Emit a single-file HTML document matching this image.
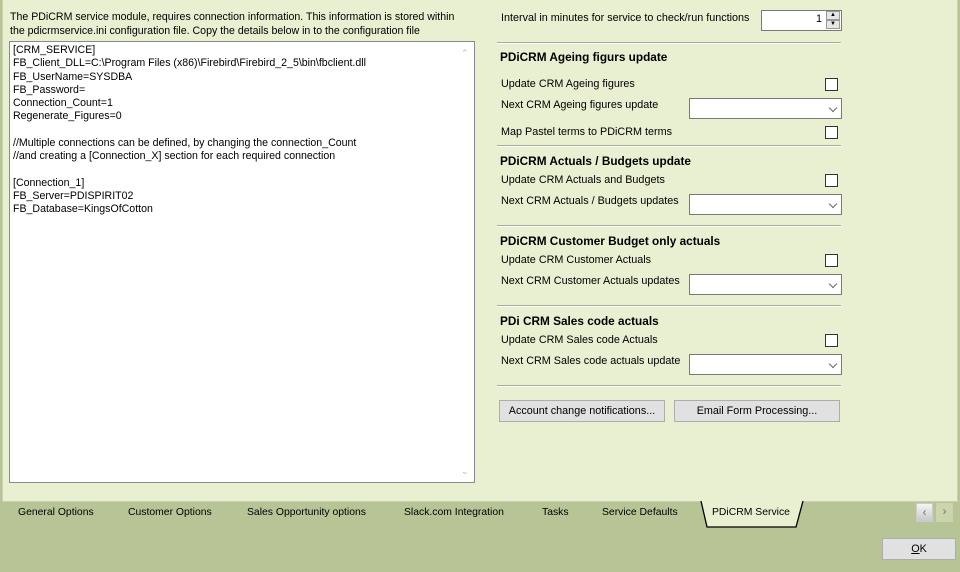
<!DOCTYPE html>
<html><head><style>
*{margin:0;padding:0;box-sizing:border-box}
body{width:960px;height:572px;background:#b6c496;font-family:"Liberation Sans",sans-serif;font-size:10.8px;color:#000;position:relative;overflow:hidden}
.a{position:absolute;white-space:nowrap}
#panel{position:absolute;left:2px;top:0;width:956px;height:502px;background:#e9efd1;border:1px solid #c9d0b0;border-top:none}
#memo{left:9px;top:41px;width:466px;height:442px;background:#fff;border:1px solid #8a8a8a;padding:2px 3px;line-height:13.25px;font-size:10.6px;white-space:pre}
.hr{position:absolute;left:497px;width:344px;height:2px;border-top:1px solid #a8ad98;border-bottom:1px solid #fff}
.cb{position:absolute;left:825px;width:13px;height:13px;background:#fff;border:1px solid #333}
.combo{position:absolute;left:689px;width:153px;height:21px;background:#fff;border:1px solid #7a7a7a}
.combo:after{content:"";position:absolute;right:5px;top:6px;width:5px;height:5px;border-right:1px solid #666;border-bottom:1px solid #666;transform:rotate(45deg)}
.h{font-weight:bold;font-size:11.8px}
.l{margin-top:1px}
.btn{position:absolute;top:400px;height:22px;background:#e1e1e1;border:1px solid #adadad;text-align:center;line-height:20px}
.tab{position:absolute;top:507px;font-size:10.4px}
</style></head><body>
<div id="panel"></div>
<div class="a" style="left:10px;top:10px;line-height:14px;font-size:10.6px">The PDiCRM service module, requires connection information. This information is stored within<br>the pdicrmservice.ini configuration file. Copy the details below in to the configuration file</div>
<div class="a" id="memo">[CRM_SERVICE]
FB_Client_DLL=C:\Program Files (x86)\Firebird\Firebird_2_5\bin\fbclient.dll
FB_UserName=SYSDBA
FB_Password=
Connection_Count=1
Regenerate_Figures=0

//Multiple connections can be defined, by changing the connection_Count
//and creating a [Connection_X] section for each required connection

[Connection_1]
FB_Server=PDISPIRIT02
FB_Database=KingsOfCotton</div>
<div class="a" style="left:461px;top:48px;color:#bbb;font-size:9px">&#8963;</div>
<div class="a" style="left:461px;top:466px;color:#bbb;font-size:9px">&#8964;</div>

<div class="a l" style="left:501px;top:11px">Interval in minutes for service to check/run functions</div>
<div class="a" style="left:761px;top:10px;width:81px;height:21px;background:#fff;border:1px solid #7a7a7a"></div>
<div class="a" style="left:816px;top:13px">1</div>
<div class="a" style="left:826px;top:11px;width:14px;height:9px;background:#e6e6e6;border:1px solid #999;font-size:6px;text-align:center;line-height:7px">&#9650;</div>
<div class="a" style="left:826px;top:20px;width:14px;height:9px;background:#e6e6e6;border:1px solid #999;font-size:6px;text-align:center;line-height:7px">&#9660;</div>

<div class="hr" style="top:42px"></div>
<div class="a h" style="left:500px;top:50px">PDiCRM Ageing figurs update</div>
<div class="a l" style="left:501px;top:77px">Update CRM Ageing figures</div><div class="cb" style="top:78px"></div>
<div class="a l" style="left:501px;top:98px">Next CRM Ageing figures update</div><div class="combo" style="top:98px"></div>
<div class="a l" style="left:501px;top:125px">Map Pastel terms to PDiCRM terms</div><div class="cb" style="top:126px"></div>

<div class="hr" style="top:145px"></div>
<div class="a h" style="left:500px;top:154px">PDiCRM Actuals / Budgets update</div>
<div class="a l" style="left:501px;top:173px">Update CRM Actuals and Budgets</div><div class="cb" style="top:174px"></div>
<div class="a l" style="left:501px;top:194px">Next CRM Actuals / Budgets updates</div><div class="combo" style="top:194px"></div>

<div class="hr" style="top:225px"></div>
<div class="a h" style="left:500px;top:234px">PDiCRM Customer Budget only actuals</div>
<div class="a l" style="left:501px;top:253px">Update CRM Customer Actuals</div><div class="cb" style="top:254px"></div>
<div class="a l" style="left:501px;top:274px">Next CRM Customer Actuals updates</div><div class="combo" style="top:274px"></div>

<div class="hr" style="top:305px"></div>
<div class="a h" style="left:500px;top:314px">PDi CRM Sales code actuals</div>
<div class="a l" style="left:501px;top:333px">Update CRM Sales code Actuals</div><div class="cb" style="top:334px"></div>
<div class="a l" style="left:501px;top:354px">Next CRM Sales code actuals update</div><div class="combo" style="top:354px"></div>

<div class="hr" style="top:385px"></div>
<div class="btn" style="left:499px;width:166px">Account change notifications...</div>
<div class="btn" style="left:674px;width:166px">Email Form Processing...</div>

<div class="tab" style="left:18px">General Options</div>
<div class="tab" style="left:128px">Customer Options</div>
<div class="tab" style="left:247px">Sales Opportunity options</div>
<div class="tab" style="left:404px">Slack.com Integration</div>
<div class="tab" style="left:542px">Tasks</div>
<div class="tab" style="left:602px">Service Defaults</div>
<svg class="a" style="left:700px;top:501px" width="106" height="28"><path d="M1 0 L7 26 L96 26 L103 0" fill="#e9efd1" stroke="#000" stroke-width="1.3"/></svg>
<div class="tab" style="left:712px">PDiCRM Service</div>
<div class="a" style="left:916px;top:503px;width:17px;height:19px;background:linear-gradient(#f4f4f4,#c8c8c8);border:1px solid #ccc;font-size:12px;text-align:center;line-height:17px;color:#776">&lsaquo;</div>
<div class="a" style="left:936px;top:503px;width:17px;height:19px;background:#cbd5ad;font-size:12px;text-align:center;line-height:17px;color:#776">&rsaquo;</div>
<div class="a" style="left:882px;top:538px;width:74px;height:22px;background:#e1e1e1;border:1px solid #adadad;text-align:center;line-height:20px"><u>O</u>K</div>
</body></html>
